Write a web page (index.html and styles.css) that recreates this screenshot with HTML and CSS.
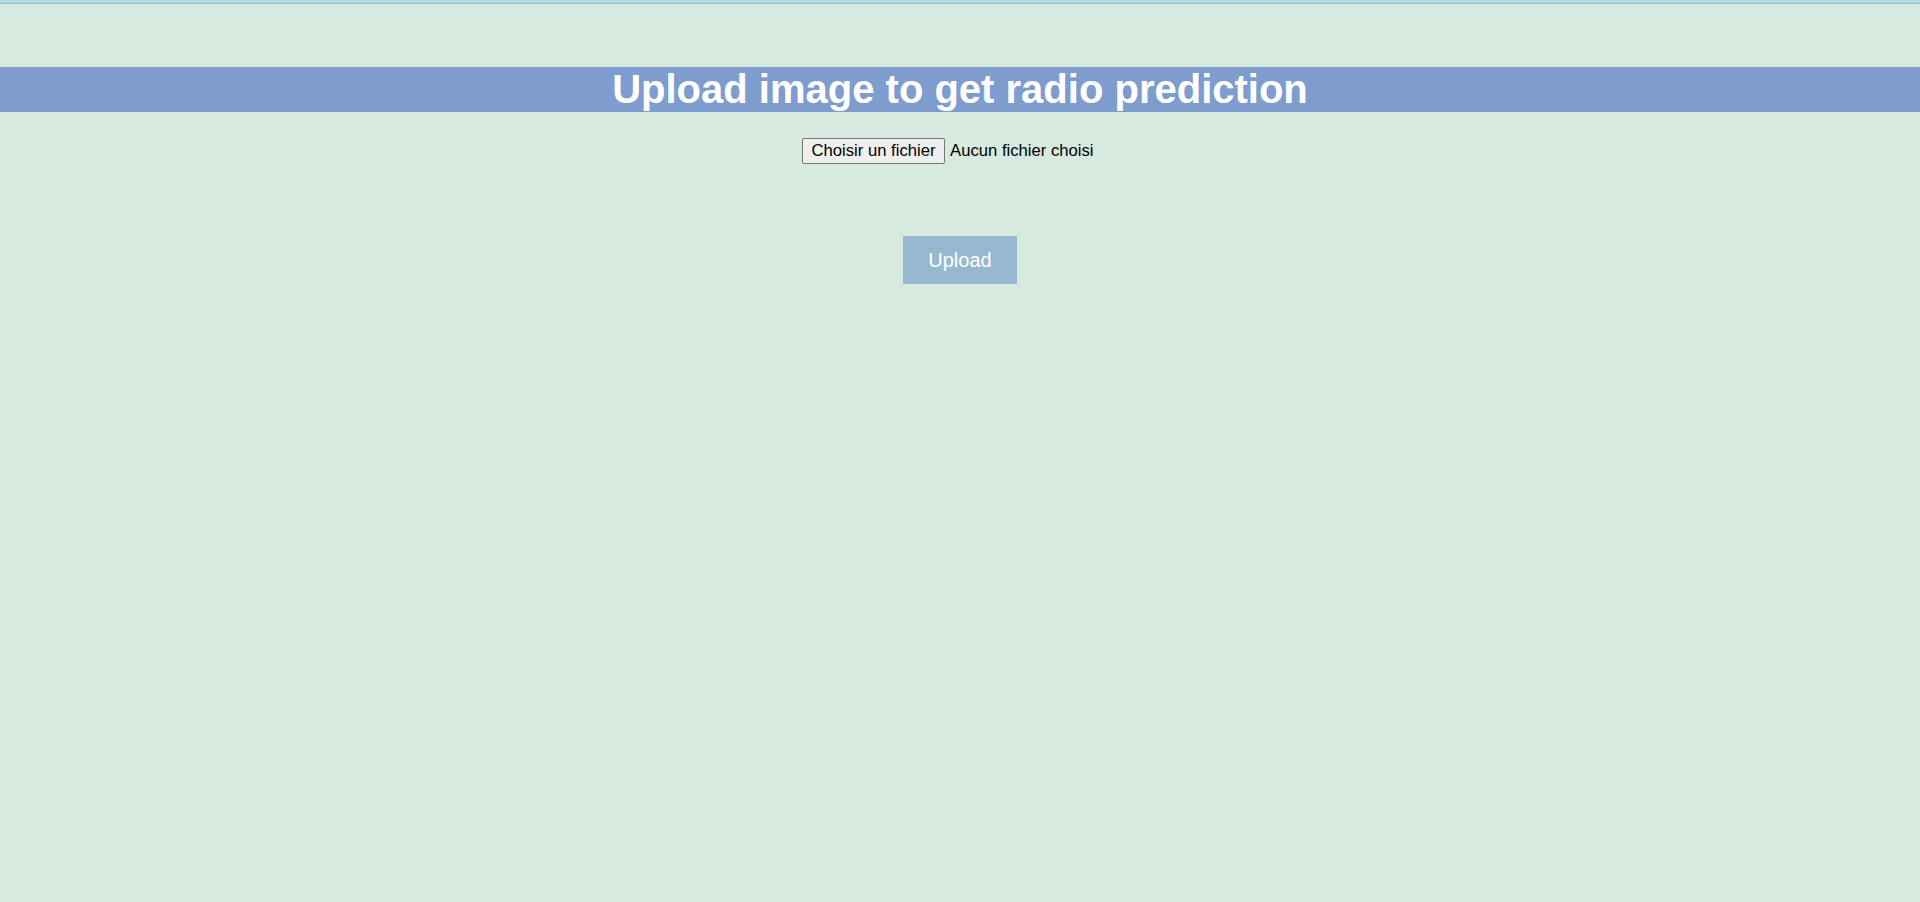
FILE: index.html
```html
<!DOCTYPE html>
<html lang="fr">
<head>
<meta charset="utf-8">
<title>Radio prediction</title>
<link rel="stylesheet" href="styles.css">
</head>
<body>
<div class="topbar"></div>
<h1 class="banner">Upload image to get radio prediction</h1>
<form class="upload-form">
  <div class="file-row">
    <label class="file-picker">
      <span class="file-btn">Choisir un fichier</span><span class="file-name">Aucun fichier choisi</span>
    </label>
  </div>
  <div class="submit-row">
    <button type="button" class="upload-btn">Upload</button>
  </div>
</form>
</body>
</html>
```

FILE: styles.css
```css
html, body {
  margin: 0;
  padding: 0;
  height: 100%;
}
body {
  background: #d6eadf;
  font-family: "Liberation Sans", Arial, sans-serif;
}
.topbar {
  height: 3px;
  background: #b3dde2;
  border-bottom: 1px solid #8dbec8;
}
.banner {
  margin: 63px 0 0;
  height: 45px;
  line-height: 45px;
  background: #7f9ccf;
  color: #ffffff;
  text-align: center;
  font-size: 40px;
  font-weight: bold;
}
.upload-form {
  display: flex;
  flex-direction: column;
  align-items: center;
}
.file-row {
  margin-top: 26px;
  display: flex;
  justify-content: center;
  width: 316px;
}
.file-picker {
  display: flex;
  align-items: center;
  width: 316px;
  font-size: 16.67px;
  color: #000;
}
.file-btn {
  box-sizing: border-box;
  height: 26px;
  line-height: 24px;
  padding: 0 8.5px;
  background: #efefef;
  border: 1px solid #767676;
  border-radius: 2px;
  white-space: nowrap;
}
.file-name {
  margin-left: 5px;
  white-space: nowrap;
}
.submit-row {
  margin-top: 72px;
  display: flex;
  justify-content: center;
}
.upload-btn {
  border: none;
  background: #96b8d0;
  color: #ffffff;
  font-family: "Liberation Sans", Arial, sans-serif;
  font-size: 20px;
  line-height: 46px;
  height: 48px;
  padding: 0 25.5px;
  cursor: pointer;
}
```
